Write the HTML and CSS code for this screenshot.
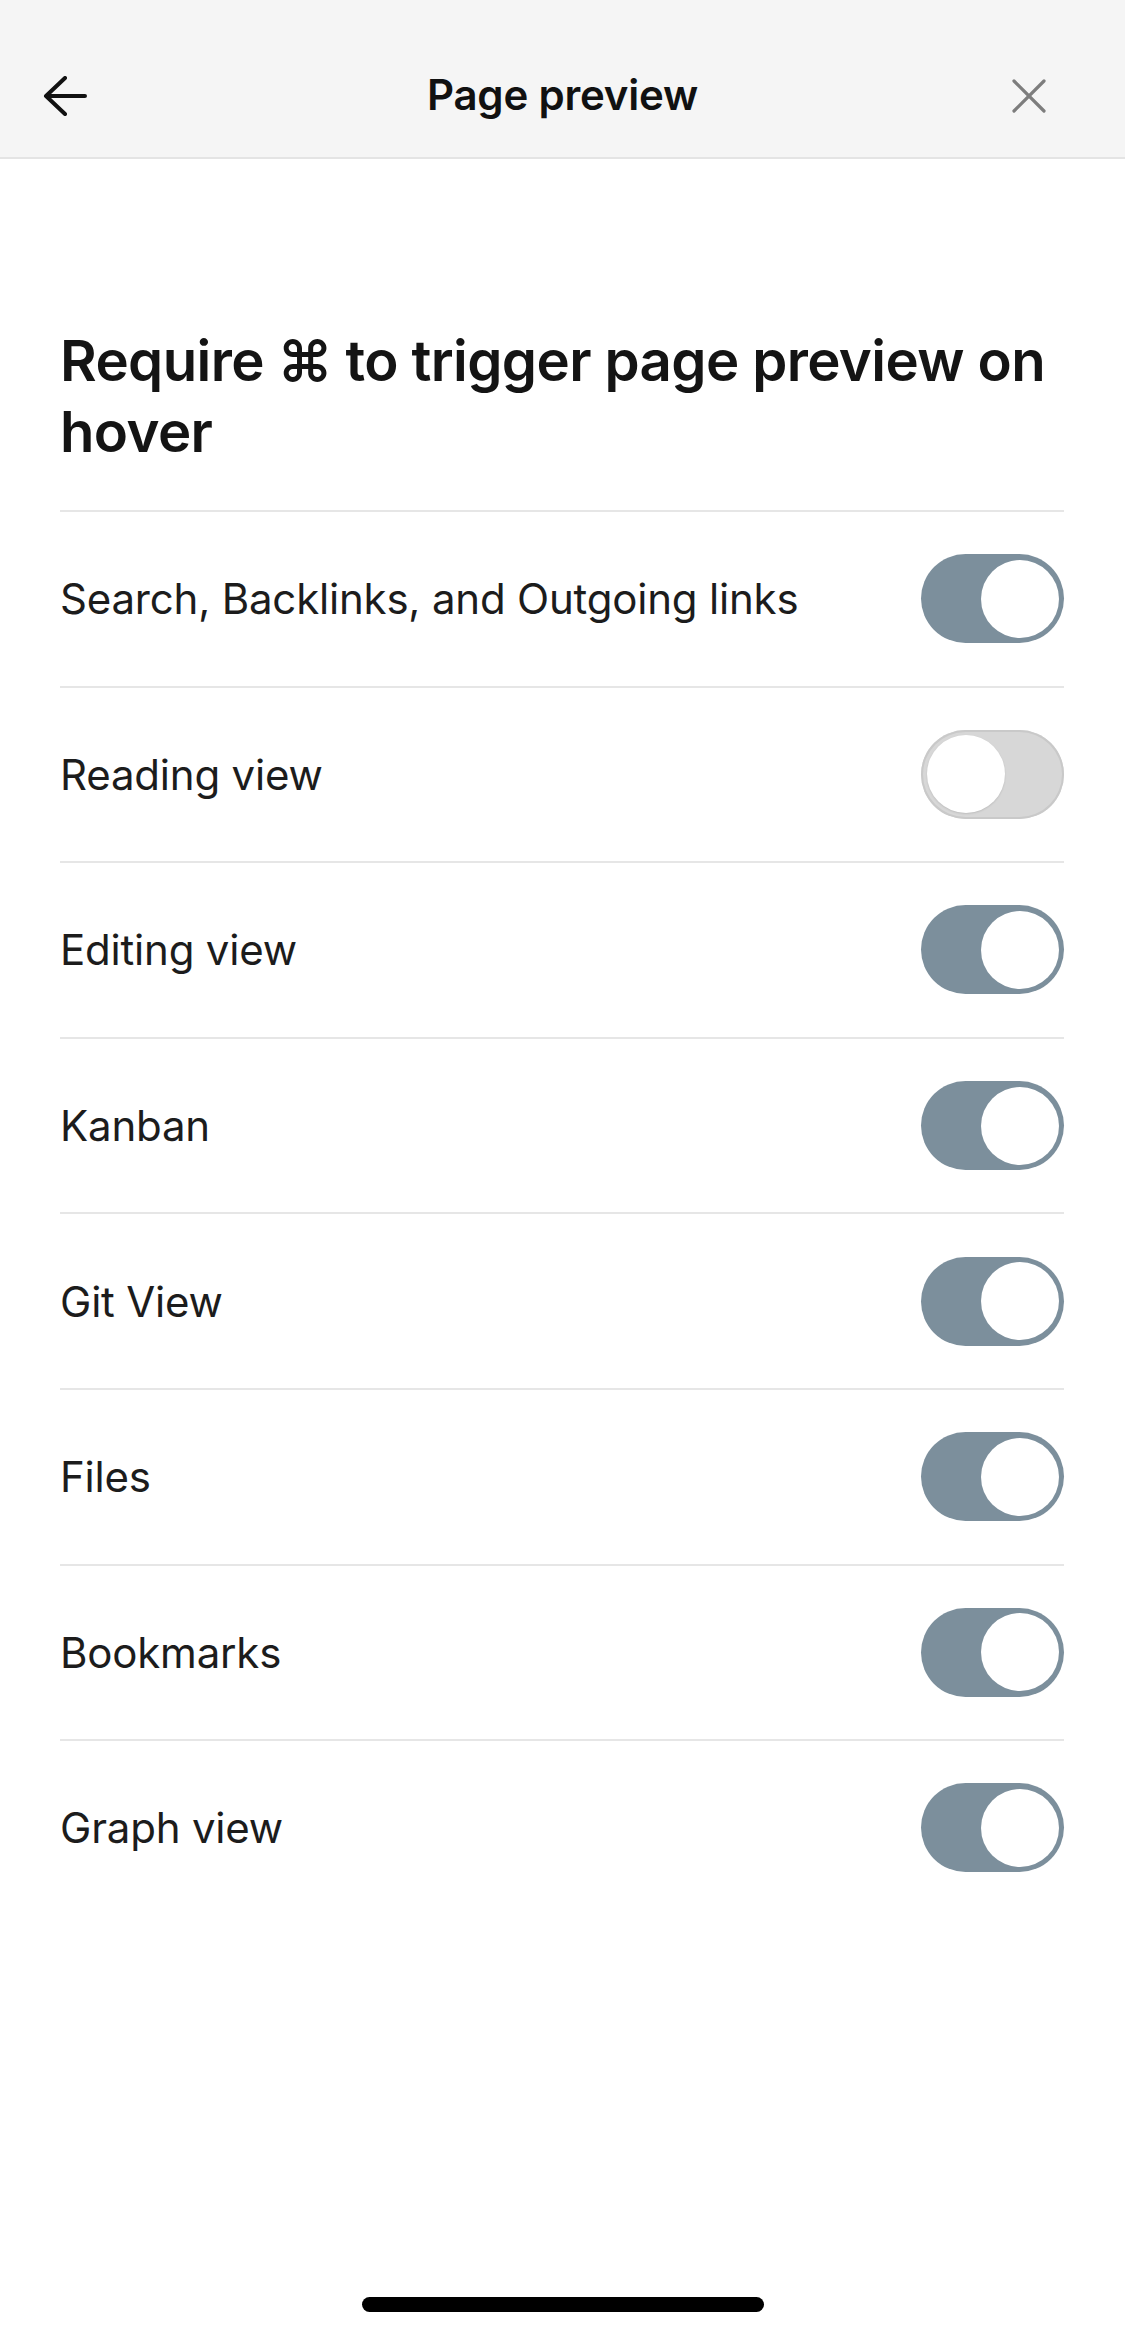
FILE: index.html
```html
<!DOCTYPE html>
<html>
<head>
<meta charset="utf-8">
<link rel="stylesheet" href="styles.css">
</head>
<body>
<div class="screen">
  <header class="topbar">
    <button class="icon-btn back" aria-label="Back">
      <svg width="44" height="40" viewBox="0 0 44 40"><path d="M22 2 L3 20 L22 38 M3 20 H42" fill="none" stroke="#111" stroke-width="4" stroke-linecap="round" stroke-linejoin="round"/></svg>
    </button>
    <div class="topbar-title">Page preview</div>
    <button class="icon-btn close" aria-label="Close">
      <svg width="36" height="36" viewBox="0 0 36 36"><path d="M3 3 L33 33 M33 3 L3 33" fill="none" stroke="#7d7d7d" stroke-width="3.2" stroke-linecap="round"/></svg>
    </button>
  </header>
  <main class="content">
    <h1 class="heading">Require ⌘ to trigger page preview on hover</h1>
    <div class="list">
      <div class="row"><span class="label">Search, Backlinks, and Outgoing links</span><span class="toggle on"><span class="knob"></span></span></div>
      <div class="row"><span class="label">Reading view</span><span class="toggle off"><span class="knob"></span></span></div>
      <div class="row"><span class="label">Editing view</span><span class="toggle on"><span class="knob"></span></span></div>
      <div class="row"><span class="label">Kanban</span><span class="toggle on"><span class="knob"></span></span></div>
      <div class="row"><span class="label">Git View</span><span class="toggle on"><span class="knob"></span></span></div>
      <div class="row"><span class="label">Files</span><span class="toggle on"><span class="knob"></span></span></div>
      <div class="row"><span class="label">Bookmarks</span><span class="toggle on"><span class="knob"></span></span></div>
      <div class="row"><span class="label">Graph view</span><span class="toggle on"><span class="knob"></span></span></div>
    </div>
  </main>
  <div class="home-bar"></div>
</div>
</body>
</html>
```

FILE: styles.css
```css
* { box-sizing: border-box; }
html, body {
  margin: 0;
  padding: 0;
  background: #ffffff;
}
body {
  font-family: Inter, "Noto Sans", "DejaVu Sans", sans-serif;
  color: #1a1a1a;
}
.screen {
  width: 1125px;
  height: 2336px;
  display: flex;
  flex-direction: column;
  position: relative;
  overflow: hidden;
}
.topbar {
  height: 159px;
  background: #f5f5f5;
  border-bottom: 2px solid #e4e4e4;
  display: grid;
  grid-template-columns: 1fr auto 1fr;
  align-items: center;
  padding: 34px 43px 0 43px;
  flex-shrink: 0;
}
.icon-btn {
  background: none;
  border: none;
  padding: 0;
  display: flex;
  align-items: center;
  justify-content: center;
  width: 50px;
  height: 50px;
}
.icon-btn.back { justify-content: flex-start; }
.icon-btn.close { justify-self: end; width: 36px; margin-right: 35px; }
.topbar-title {
  font-size: 42px;
  font-weight: 600;
  letter-spacing: -0.2px;
  color: #111;
  margin-top: -2px;
}
.content {
  padding: 166px 61px 0 60px;
  flex: 1;
}
.heading {
  margin: 0;
  font-size: 56.3px;
  line-height: 71px;
  font-weight: 600;
  letter-spacing: -0.6px;
  color: #141414;
  padding-bottom: 43px;
}
.list {
  display: flex;
  flex-direction: column;
}
.row {
  height: 175.6px;
  border-top: 2px solid #e6e6e6;
  display: flex;
  align-items: center;
  justify-content: space-between;
}
.label {
  font-size: 42px;
  font-weight: 400;
  color: #1c1c1c;
  letter-spacing: -0.2px;
}
.toggle {
  width: 143px;
  height: 89px;
  border-radius: 45px;
  position: relative;
  flex-shrink: 0;
}
.toggle.on {
  background: #7c8f9c;
}
.toggle.off {
  background: #d7d7d7;
  box-shadow: inset 0 0 0 2px #c9c9c9;
}
.knob {
  position: absolute;
  width: 78px;
  height: 78px;
  border-radius: 50%;
  background: #ffffff;
  top: 5.5px;
}
.toggle.on .knob { right: 5px; }
.toggle.off .knob {
  left: 6px;
  box-shadow: 0 1px 2px rgba(0,0,0,0.12);
}
.home-bar {
  position: absolute;
  left: 362px;
  top: 2297px;
  width: 402px;
  height: 15px;
  border-radius: 8px;
  background: #000;
}
```
